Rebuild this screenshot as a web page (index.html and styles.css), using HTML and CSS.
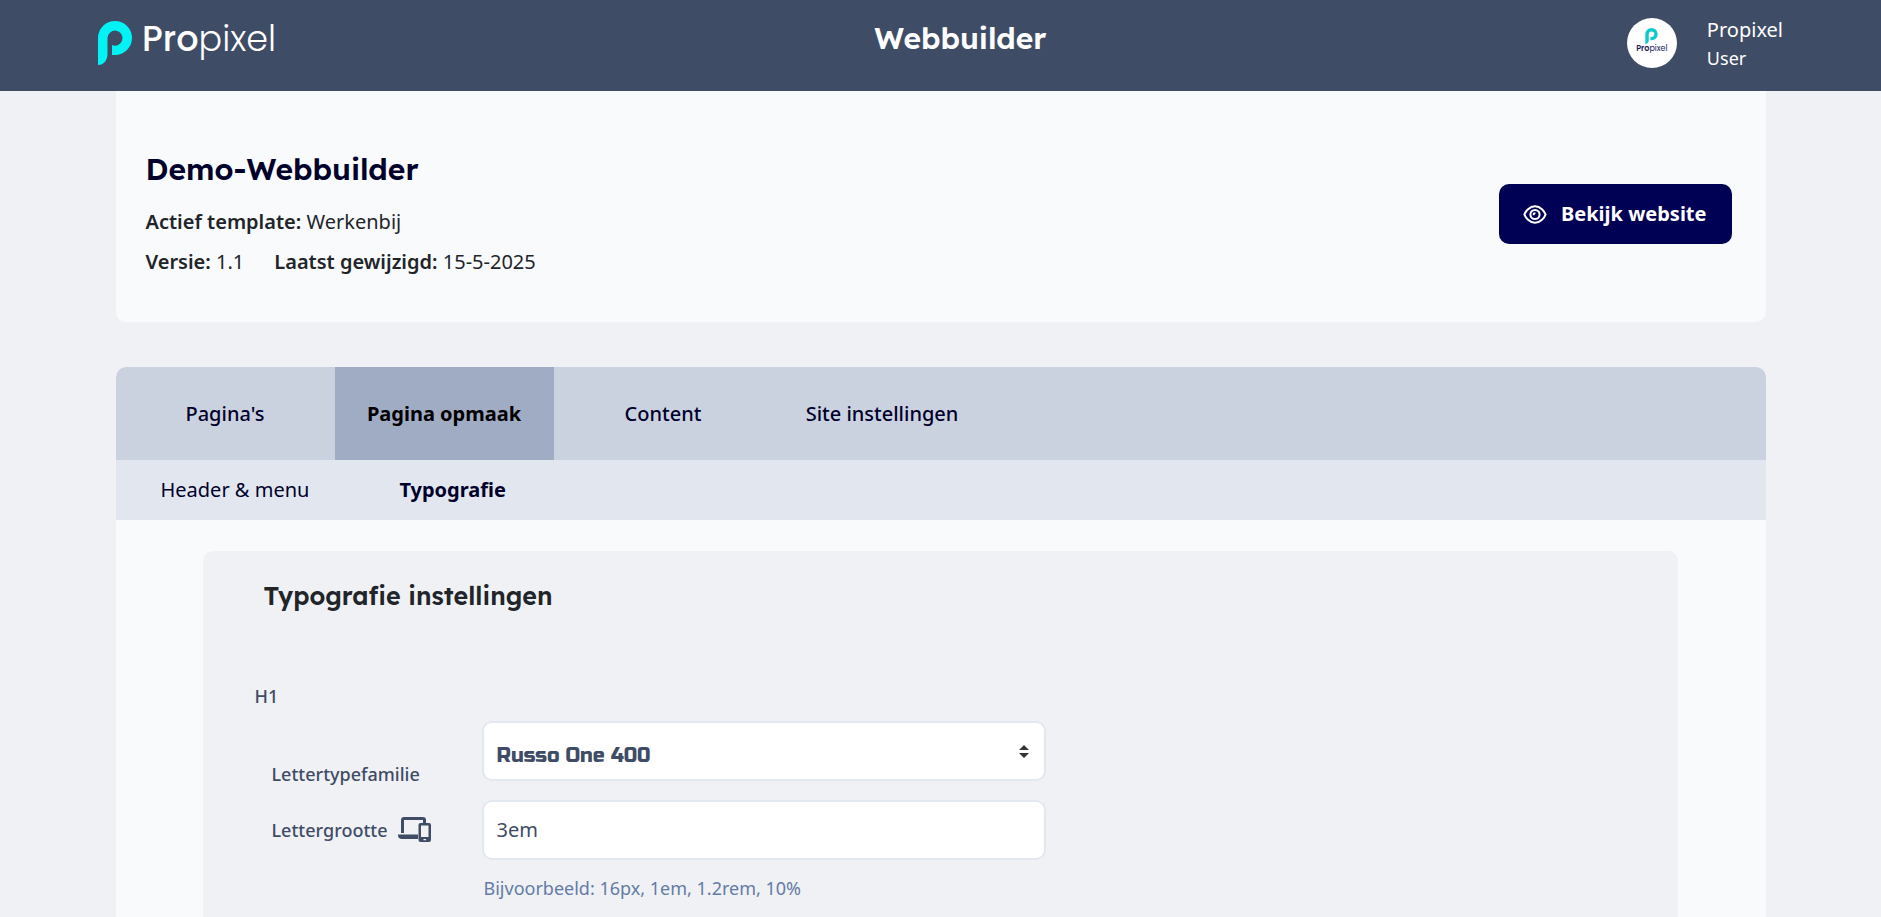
FILE: index.html
```html
<!DOCTYPE html>
<html lang="nl">
<head>
    <meta charset="UTF-8">
    <meta name="viewport" content="width=device-width, initial-scale=1.0">
    <title>Webbuilder</title>
    <link rel="stylesheet" href="styles.css">
</head>
<body>

    <header class="topbar">
        <a href="#" class="logo">
            <svg class="logo-mark" viewBox="0 0 34 44" aria-hidden="true">
                <path d="M0 44V17A17 17 0 1 1 17 34H14V24A7.5 7.5 0 1 0 9.5 17V33C9.5 39 6 44 0 44Z"/>
            </svg>
            <span class="logo-text"><b>Pro</b>pixel</span>
        </a>
        <div class="topbar-title">Webbuilder</div>
        <div class="account">
            <div class="avatar">
                <svg class="avatar-mark" viewBox="0 0 34 44" aria-hidden="true">
                    <path d="M0 44V17A17 17 0 1 1 17 34H14V24A7.5 7.5 0 1 0 9.5 17V33C9.5 39 6 44 0 44Z"/>
                </svg>
                <span class="avatar-text"><b>Pro</b>pixel</span>
            </div>
            <div class="account-info">
                <span class="account-name">Propixel</span>
                <span class="account-role">User</span>
            </div>
        </div>
    </header>

    <main class="container">
        <section class="site-card">
            <div class="site-info">
                <h1>Demo-Webbuilder</h1>
                <p><strong>Actief template:</strong> Werkenbij</p>
                <p class="meta">
                    <span><strong>Versie:</strong> 1.1</span>
                    <span><strong>Laatst gewijzigd:</strong> 15-5-2025</span>
                </p>
            </div>
            <a href="#" class="btn-view">
                <svg class="icon-eye" viewBox="0 0 576 512" aria-hidden="true">
                    <path d="M288 56c-70 0-127 32-170 72-44 41-74 88-89 128 15 40 45 87 89 128 43 40 100 72 170 72s127-32 170-72c44-41 74-88 89-128-15-40-45-87-89-128-43-40-100-72-170-72z"/>
                    <circle cx="288" cy="256" r="112"/>
                    <path d="M278 206c0 28-18 44-44 44"/>
                </svg>
                Bekijk website
            </a>
        </section>

        <section class="editor">
            <nav class="tabs">
                <a href="#">Pagina's</a>
                <a href="#" class="active">Pagina opmaak</a>
                <a href="#">Content</a>
                <a href="#">Site instellingen</a>
            </nav>
            <nav class="subtabs">
                <a href="#">Header &amp; menu</a>
                <a href="#" class="active">Typografie</a>
            </nav>

            <form class="panel">
                <h2>Typografie instellingen</h2>
                <h3>H1</h3>

                <div class="field">
                    <label for="fontFamily" class="label-low">Lettertypefamilie</label>
                    <div class="select-wrap">
                        <select id="fontFamily" name="fontFamily">
                            <option>Russo One 400</option>
                        </select>
                        <svg class="icon-sort" viewBox="0 0 10 13" aria-hidden="true">
                            <path d="M5 0L10 5H0ZM0 8H10L5 13Z"/>
                        </svg>
                    </div>
                </div>

                <div class="field">
                    <label for="fontSize">
                        Lettergrootte
                        <svg class="icon-devices" viewBox="0 0 33 25" aria-hidden="true">
                            <path d="M3 16V3A3 3 0 0 1 6 0H25A3 3 0 0 1 28 3V6H25V3H6V16Z"/>
                            <path d="M0 17.5H20V22H4A4 4 0 0 1 0 18Z"/>
                            <path fill-rule="evenodd" d="M22.500 6H31A2 2 0 0 1 33 8V23A2 2 0 0 1 31 25H22.500A2 2 0 0 1 20.500 23V8A2 2 0 0 1 22.500 6ZM23 8.500V20H30.500V8.500ZM25.500 22V23.200H28V22Z"/>
                        </svg>
                    </label>
                    <input type="text" id="fontSize" name="fontSize" value="3em" aria-describedby="fontSizeHelp">
                </div>

                <div class="help" id="fontSizeHelp">Bijvoorbeeld: 16px, 1em, 1.2rem, 10%</div>
            </form>
        </section>
    </main>

</body>
</html>
```
FILE: styles.css
```css
* {
    box-sizing: border-box;
}
body {
    margin: 0;
    min-height: 100vh;
    display: flex;
    flex-direction: column;
    background-color: #eff1f5;
    color: #212529;
    font-family: "Noto Sans", sans-serif;
    font-size: 20px;
    line-height: 30px;
}
a {
    color: inherit;
    text-decoration: none;
}
h1, h2, h3, p {
    margin: 0;
}
h1, h2, .topbar-title {
    font-family: Lexend, Inter, sans-serif;
    font-size: 30px;
    font-weight: 600;
    line-height: 40px;
}

/* top bar */
.topbar {
    display: flex;
    justify-content: space-between;
    height: 91px;
    padding: 0 98px;
    background-color: #3f4c65;
    color: #fff;
}
.logo {
    display: flex;
    gap: 10px;
    width: 196px;
    padding-top: 21px;
}
.logo-mark {
    width: 34px;
    height: 44px;
    fill: #00f3f5;
}
.logo-text {
    font-family: Poppins, Lato, sans-serif;
    font-size: 35px;
    font-weight: 300;
    line-height: 36px;
}
.logo-text b {
    font-weight: 500;
}
.topbar-title {
    padding-top: 18px;
}
.account {
    display: flex;
    gap: 30px;
    padding-top: 16px;
}
.avatar {
    display: flex;
    flex-direction: column;
    align-items: center;
    width: 50px;
    height: 50px;
    margin-top: 2px;
    padding-top: 10px;
    border-radius: 50%;
    background-color: #fff;
}
.avatar-mark {
    width: 13px;
    height: 16px;
    fill: #0cc9cc;
}
.avatar-text {
    color: #1d1b5e;
    font-family: Poppins, Lato, sans-serif;
    font-size: 8px;
    line-height: 10px;
}
.avatar-text b {
    font-weight: 600;
}
.account-info {
    display: flex;
    flex-direction: column;
}
.account-name {
    line-height: 28px;
}
.account-role {
    font-size: 18px;
    line-height: 28px;
}

/* site card */
.container {
    flex: 1;
    display: flex;
    flex-direction: column;
    width: 100%;
    max-width: 1650px;
    margin: 0 auto;
}
.site-card {
    display: flex;
    justify-content: space-between;
    align-items: flex-start;
    padding: 58px 34px 40px 30px;
    border-radius: 0 0 10px 10px;
    background-color: #f9fafc;
}
.site-card h1 {
    margin-bottom: 13px;
    color: #00002b;
}
.site-card p {
    line-height: 40px;
}
.site-card strong {
    font-weight: 600;
}
.meta {
    display: flex;
    gap: 30px;
}
.btn-view {
    display: flex;
    align-items: center;
    gap: 14px;
    height: 60px;
    margin-top: 35px;
    padding: 0 25px 0 24px;
    border-radius: 10px;
    background-color: #000055;
    color: #fff;
    font-weight: 700;
}
.icon-eye {
    width: 24px;
    height: 21px;
    fill: none;
    stroke: #fff;
    stroke-width: 50;
}

/* tabs */
.editor {
    flex: 1;
    display: flex;
    flex-direction: column;
    margin-top: 45px;
    border-radius: 10px 10px 0 0;
    background-color: #f9fafc;
    overflow: hidden;
}
.tabs {
    display: flex;
    background-color: #cbd2df;
}
.tabs a {
    width: 219px;
    line-height: 93px;
    text-align: center;
    color: #00002b;
    font-weight: 500;
}
.tabs .active {
    background-color: #a0abc4;
    color: #000;
    font-weight: 700;
}
.subtabs {
    display: flex;
    background-color: #e2e7ef;
}
.subtabs a {
    padding: 0 45px;
    line-height: 60px;
    color: #00002b;
}
.subtabs .active {
    font-weight: 700;
}

/* typography form */
.panel {
    flex: 1;
    margin: 31px 88px 0 87px;
    padding: 0 52px;
    border-radius: 10px 10px 0 0;
    background-color: #eff1f5;
    color: #3f4c65;
}
.panel h2 {
    padding: 25px 9px 0;
    color: #212529;
    font-size: 25px;
}
.panel h3 {
    margin: 65px 0 10px;
    font-size: 18px;
    font-weight: 500;
    line-height: 30px;
}
.field {
    display: grid;
    grid-template-columns: 210px minmax(0, 564px);
    margin-bottom: 19px;
    padding-left: 17px;
}
.field label {
    display: flex;
    align-items: center;
    gap: 10px;
    font-size: 18px;
    font-weight: 500;
}
.field .label-low {
    align-self: end;
    margin-bottom: -8px;
}
.icon-devices {
    width: 33px;
    height: 25px;
    margin-bottom: 2px;
    fill: #3f4c65;
}
.field input,
.field select {
    width: 100%;
    height: 60px;
    padding: 0 13px 1px;
    border: 2px solid #e2e7f0;
    border-radius: 10px;
    background-color: #fff;
    color: #3f4c65;
    font-family: inherit;
    font-size: 20px;
}
.field select {
    appearance: none;
    padding: 8px 13px 0;
    font-family: "Russo One", Inter, sans-serif;
    font-weight: 400;
}
.select-wrap {
    position: relative;
}
.icon-sort {
    position: absolute;
    top: 24px;
    right: 17px;
    width: 10px;
    height: 13px;
    fill: #333;
    pointer-events: none;
}
.help {
    margin-top: -6px;
    padding-left: 229px;
    color: #647ba5;
    font-size: 18px;
}
```
